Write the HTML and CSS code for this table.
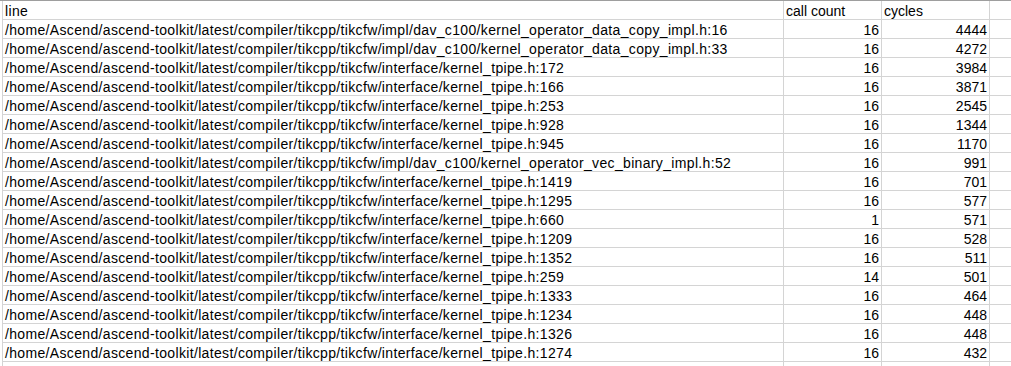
FILE: index.html
```html
<!DOCTYPE html>
<html>
<head>
<meta charset="utf-8">
<link rel="stylesheet" href="styles.css">
</head>
<body>
<div class="sheet">
  <div class="row head"><div class="c c1">line</div><div class="c c2 l">call count</div><div class="c c3 l">cycles</div><div class="c c4"></div></div>
  <div class="row"><div class="c c1">/home/Ascend/ascend-toolkit/latest/compiler/tikcpp/tikcfw/impl/dav_c100/kernel_operator_data_copy_impl.h:16</div><div class="c c2">16</div><div class="c c3">4444</div><div class="c c4"></div></div>
  <div class="row"><div class="c c1">/home/Ascend/ascend-toolkit/latest/compiler/tikcpp/tikcfw/impl/dav_c100/kernel_operator_data_copy_impl.h:33</div><div class="c c2">16</div><div class="c c3">4272</div><div class="c c4"></div></div>
  <div class="row"><div class="c c1">/home/Ascend/ascend-toolkit/latest/compiler/tikcpp/tikcfw/interface/kernel_tpipe.h:172</div><div class="c c2">16</div><div class="c c3">3984</div><div class="c c4"></div></div>
  <div class="row"><div class="c c1">/home/Ascend/ascend-toolkit/latest/compiler/tikcpp/tikcfw/interface/kernel_tpipe.h:166</div><div class="c c2">16</div><div class="c c3">3871</div><div class="c c4"></div></div>
  <div class="row"><div class="c c1">/home/Ascend/ascend-toolkit/latest/compiler/tikcpp/tikcfw/interface/kernel_tpipe.h:253</div><div class="c c2">16</div><div class="c c3">2545</div><div class="c c4"></div></div>
  <div class="row"><div class="c c1">/home/Ascend/ascend-toolkit/latest/compiler/tikcpp/tikcfw/interface/kernel_tpipe.h:928</div><div class="c c2">16</div><div class="c c3">1344</div><div class="c c4"></div></div>
  <div class="row"><div class="c c1">/home/Ascend/ascend-toolkit/latest/compiler/tikcpp/tikcfw/interface/kernel_tpipe.h:945</div><div class="c c2">16</div><div class="c c3">1170</div><div class="c c4"></div></div>
  <div class="row"><div class="c c1">/home/Ascend/ascend-toolkit/latest/compiler/tikcpp/tikcfw/impl/dav_c100/kernel_operator_vec_binary_impl.h:52</div><div class="c c2">16</div><div class="c c3">991</div><div class="c c4"></div></div>
  <div class="row"><div class="c c1">/home/Ascend/ascend-toolkit/latest/compiler/tikcpp/tikcfw/interface/kernel_tpipe.h:1419</div><div class="c c2">16</div><div class="c c3">701</div><div class="c c4"></div></div>
  <div class="row"><div class="c c1">/home/Ascend/ascend-toolkit/latest/compiler/tikcpp/tikcfw/interface/kernel_tpipe.h:1295</div><div class="c c2">16</div><div class="c c3">577</div><div class="c c4"></div></div>
  <div class="row"><div class="c c1">/home/Ascend/ascend-toolkit/latest/compiler/tikcpp/tikcfw/interface/kernel_tpipe.h:660</div><div class="c c2">1</div><div class="c c3">571</div><div class="c c4"></div></div>
  <div class="row"><div class="c c1">/home/Ascend/ascend-toolkit/latest/compiler/tikcpp/tikcfw/interface/kernel_tpipe.h:1209</div><div class="c c2">16</div><div class="c c3">528</div><div class="c c4"></div></div>
  <div class="row"><div class="c c1">/home/Ascend/ascend-toolkit/latest/compiler/tikcpp/tikcfw/interface/kernel_tpipe.h:1352</div><div class="c c2">16</div><div class="c c3">511</div><div class="c c4"></div></div>
  <div class="row"><div class="c c1">/home/Ascend/ascend-toolkit/latest/compiler/tikcpp/tikcfw/interface/kernel_tpipe.h:259</div><div class="c c2">14</div><div class="c c3">501</div><div class="c c4"></div></div>
  <div class="row"><div class="c c1">/home/Ascend/ascend-toolkit/latest/compiler/tikcpp/tikcfw/interface/kernel_tpipe.h:1333</div><div class="c c2">16</div><div class="c c3">464</div><div class="c c4"></div></div>
  <div class="row"><div class="c c1">/home/Ascend/ascend-toolkit/latest/compiler/tikcpp/tikcfw/interface/kernel_tpipe.h:1234</div><div class="c c2">16</div><div class="c c3">448</div><div class="c c4"></div></div>
  <div class="row"><div class="c c1">/home/Ascend/ascend-toolkit/latest/compiler/tikcpp/tikcfw/interface/kernel_tpipe.h:1326</div><div class="c c2">16</div><div class="c c3">448</div><div class="c c4"></div></div>
  <div class="row"><div class="c c1">/home/Ascend/ascend-toolkit/latest/compiler/tikcpp/tikcfw/interface/kernel_tpipe.h:1274</div><div class="c c2">16</div><div class="c c3">432</div><div class="c c4"></div></div>
  <div class="row"><div class="c c1"></div><div class="c c2"></div><div class="c c3"></div><div class="c c4"></div></div>
</div>
</body>
</html>
```
FILE: styles.css
```css
html, body {
  margin: 0;
  padding: 0;
  background: #ffffff;
  overflow: hidden;
}
body {
  font-family: "Liberation Sans", Arial, sans-serif;
  font-size: 14px;
  color: #000000;
}
.sheet {
  border-top: 1px solid #9e9e9e;
  padding-left: 2px;
}
.row {
  display: grid;
  grid-template-columns: 782px 98px 108px 1fr;
  height: 19px;
}
.c {
  box-sizing: border-box;
  height: 19px;
  border-right: 1px solid #d4d4d4;
  border-bottom: 1px solid #d4d4d4;
  line-height: 18px;
  padding-top: 1px;
  white-space: nowrap;
  overflow: hidden;
}
.c1 {
  border-left: 1px solid #d4d4d4;
  padding-left: 2px;
  letter-spacing: 0.34px;
}
.c2, .c3 {
  text-align: right;
  padding-right: 2px;
}
.c2.l, .c3.l {
  text-align: left;
  padding-left: 2px;
}
.c4 {
  border-right: none;
}
```
